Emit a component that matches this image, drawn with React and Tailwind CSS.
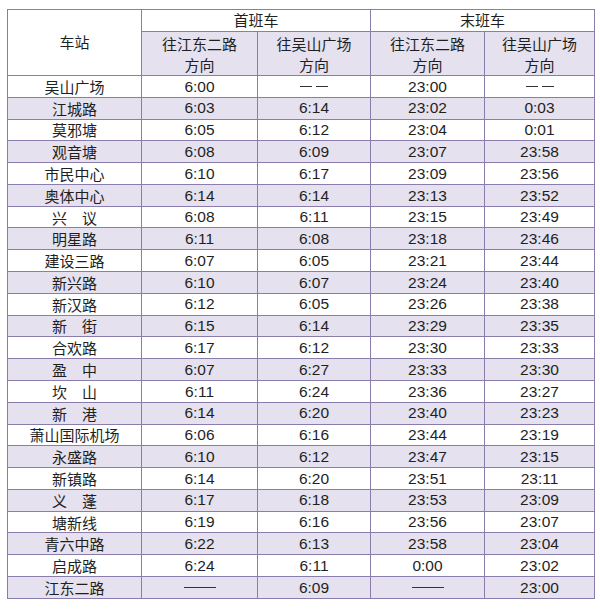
import React from "react";

const rows = [
  ["吴山广场", "6:00", "d1", "23:00", "d1"],
  ["江城路", "6:03", "6:14", "23:02", "0:03"],
  ["莫邪塘", "6:05", "6:12", "23:04", "0:01"],
  ["观音塘", "6:08", "6:09", "23:07", "23:58"],
  ["市民中心", "6:10", "6:17", "23:09", "23:56"],
  ["奥体中心", "6:14", "6:14", "23:13", "23:52"],
  ["兴　议", "6:08", "6:11", "23:15", "23:49"],
  ["明星路", "6:11", "6:08", "23:18", "23:46"],
  ["建设三路", "6:07", "6:05", "23:21", "23:44"],
  ["新兴路", "6:10", "6:07", "23:24", "23:40"],
  ["新汉路", "6:12", "6:05", "23:26", "23:38"],
  ["新　街", "6:15", "6:14", "23:29", "23:35"],
  ["合欢路", "6:17", "6:12", "23:30", "23:33"],
  ["盈　中", "6:07", "6:27", "23:33", "23:30"],
  ["坎　山", "6:11", "6:24", "23:36", "23:27"],
  ["新　港", "6:14", "6:20", "23:40", "23:23"],
  ["萧山国际机场", "6:06", "6:16", "23:44", "23:19"],
  ["永盛路", "6:10", "6:12", "23:47", "23:15"],
  ["新镇路", "6:14", "6:20", "23:51", "23:11"],
  ["义　蓬", "6:17", "6:18", "23:53", "23:09"],
  ["塘新线", "6:19", "6:16", "23:56", "23:07"],
  ["青六中路", "6:22", "6:13", "23:58", "23:04"],
  ["启成路", "6:24", "6:11", "0:00", "23:02"],
  ["江东二路", "d2", "6:09", "d2", "23:00"],
];

const cjk = { fontFamily: '"Noto Sans CJK SC", "Noto Sans", sans-serif' };
const num = { fontFamily: '"Liberation Sans", Arial, sans-serif' };

function Val({ v }) {
  if (v === "d1")
    return (
      <span className="flex items-center gap-[4px]">
        <span className="block w-[12px] h-[1px] bg-[#333]" />
        <span className="block w-[12px] h-[1px] bg-[#333]" />
      </span>
    );
  if (v === "d2") return <span className="block w-[32px] h-[1px] bg-[#333]" />;
  return (
    <span style={num} className="text-[15.5px] leading-none">
      {v}
    </span>
  );
}

export default function App() {
  const hdr = "flex items-center justify-center text-[15px] text-[#1f1f1f]";
  return (
    <div className="w-[600px] h-[612px] bg-white pt-[9px] pl-[7px]">
      <div
        className="grid w-[588px] bg-[#8a7dab] gap-[1px] p-[1px] grid-cols-[133px_115px_112px_113px_109px] grid-rows-[21px_43px_repeat(24,20.79px)]"
        style={cjk}
      >
        <div className={`${hdr} bg-white row-span-2 text-[15.5px]`}>车站</div>
        <div className={`${hdr} bg-white col-span-2 text-[15.5px]`}>首班车</div>
        <div className={`${hdr} bg-white col-span-2 text-[15.5px]`}>末班车</div>
        {["往江东二路", "往吴山广场", "往江东二路", "往吴山广场"].map((t, i) => (
          <div
            key={i}
            className={`${hdr} bg-[#e5e1ee] flex-col leading-[21px]`}
          >
            <span>{t}</span>
            <span>方向</span>
          </div>
        ))}
        {rows.map((r, i) => {
          const bg = i % 2 === 1 ? "bg-[#e5e1ee]" : "bg-white";
          return (
            <React.Fragment key={i}>
              <div className={`${hdr} ${bg} leading-none`}>{r[0]}</div>
              {r.slice(1).map((v, j) => (
                <div key={j} className={`${hdr} ${bg}`}>
                  <Val v={v} />
                </div>
              ))}
            </React.Fragment>
          );
        })}
      </div>
    </div>
  );
}
